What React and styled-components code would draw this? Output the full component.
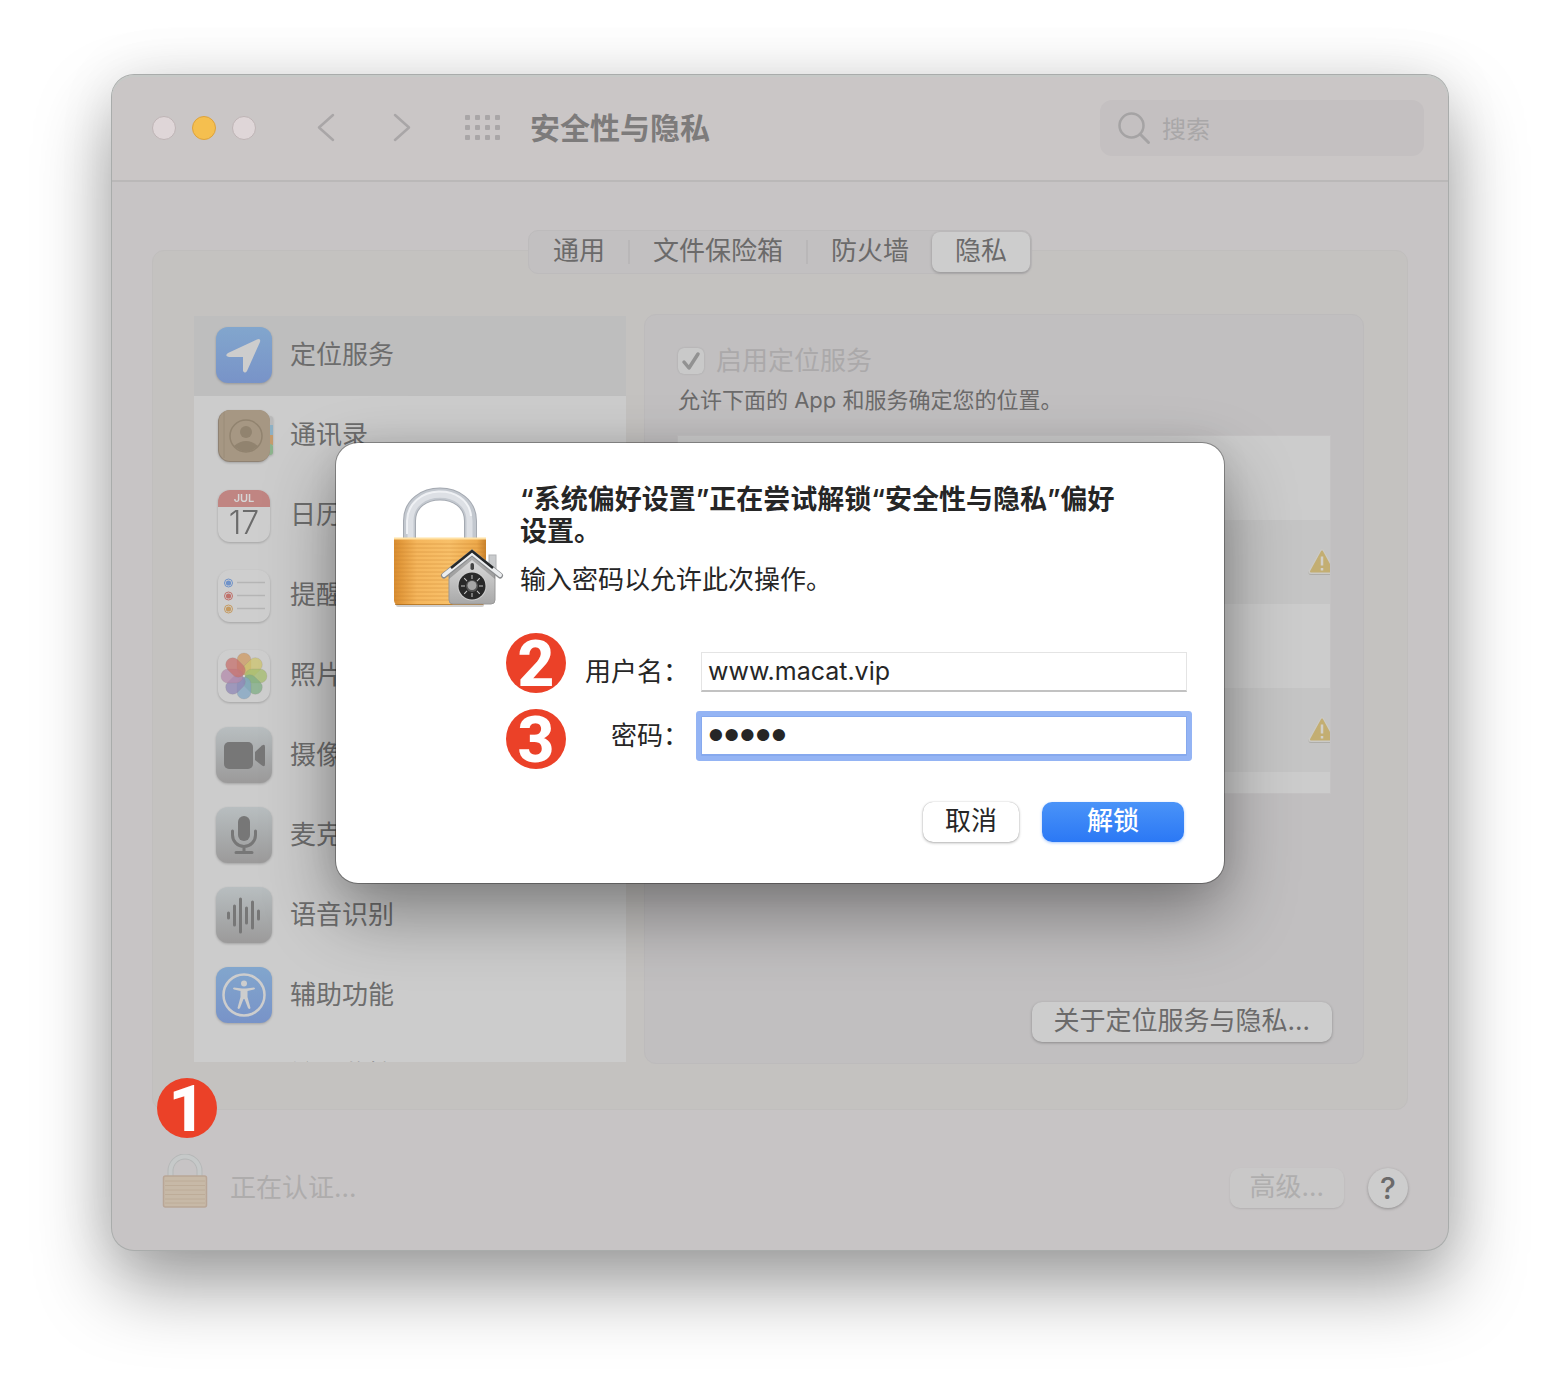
import React from 'react';
import styled, { createGlobalStyle, css } from 'styled-components';

const GlobalStyle = createGlobalStyle`
    * {
        box-sizing: border-box;
    }
    body {
        margin: 0;
        background: #fff;
        font-family: Inter, "Noto Sans CJK SC", sans-serif;
        font-size: 26px;
        line-height: 32px;
        color: #6b6a6a;
    }
    button, input {
        font: inherit;
        color: inherit;
        margin: 0;
    }
`;

const Page = styled.main`
    min-height: 100vh;
    padding: 75px 112px 148px;
`;

const Window = styled.section`
    position: relative;
    background: #c7c4c5;
    border-radius: 22px;
    box-shadow: 0 0 0 1px #a9acab, 0 0 60px rgba(0, 0, 0, .08), 0 36px 76px rgba(0, 0, 0, .38);
`;

const TitleBar = styled.header`
    display: flex;
    align-items: center;
    height: 107px;
    padding: 1px 24px 0 40px;
    background: #cac6c6;
    border-bottom: 2px solid #bab8b8;
    border-radius: 22px 22px 0 0;
    box-shadow: inset 0 2px 0 #c6c9c7;
`;

const Lights = styled.div`
    display: flex;
    gap: 16px;
`;

const Light = styled.button`
    width: 24px;
    height: 24px;
    padding: 0;
    border: 1px solid ${p => p.$active ? '#dda23c' : '#beb4b5'};
    border-radius: 50%;
    background: ${p => p.$active ? '#f5bf4f' : '#dfd6d8'};
`;

const Nav = styled.nav`
    display: flex;
    align-items: center;
    gap: 48px;
    margin-left: 58px;
`;

const IconButton = styled.button`
    display: flex;
    padding: 0;
    border: 0;
    background: none;
    color: #a9a6a7;
`;

const Title = styled.h1`
    flex: 1;
    margin: 0 0 0 28px;
    font-size: 30px;
    line-height: 36px;
    font-weight: 700;
    color: #7d7b7b;
`;

const SearchBox = styled.label`
    display: flex;
    align-items: center;
    gap: 10px;
    width: 324px;
    height: 56px;
    padding: 0 16px;
    border-radius: 12px;
    background: #c4c0c1;
    color: #a5a3a4;

    input {
        flex: 1;
        min-width: 0;
        padding: 4px 0 0;
        border: 0;
        outline: none;
        background: none;
        font-size: 24px;
    }
    input::placeholder {
        color: #a9a7a8;
        opacity: 1;
    }
`;

const Content = styled.div`
    padding: 48px 40px 0;
`;

const Tabs = styled.div`
    position: relative;
    z-index: 1;
    display: flex;
    align-items: center;
    width: max-content;
    height: 44px;
    margin: 0 auto;
    padding: 0 1px;
    border: 1px solid #bdbbbc;
    border-radius: 10px;
    background: #c2c0c1;
`;

const Tab = styled.button`
    height: 40px;
    padding: 0 23px 2px;
    border: 0;
    border-radius: 8px;
    background: none;
    line-height: 36px;

    ${p => p.$selected && css`
        background: #cdcdcd;
        box-shadow: 0 1px 3px rgba(0, 0, 0, .25);
    `}
`;

const TabDivider = styled.span`
    width: 2px;
    height: 24px;
    background: #b9b7b8;
`;

const GroupBox = styled.div`
    display: grid;
    grid-template-columns: 432px 1fr;
    gap: 18px;
    align-items: center;
    margin-top: -24px;
    padding: 63px 43px 45px 41px;
    border: 1px solid #c0bebd;
    border-radius: 12px;
    background: #c4c2c0;
`;

const Services = styled.ul`
    height: 746px;
    margin: 0;
    padding: 0;
    overflow: hidden;
    list-style: none;
    background: #cccccc;
`;

const Service = styled.li`
    display: flex;
    align-items: center;
    gap: 18px;
    height: 80px;
    padding: 0 22px 2px;
    background: ${p => p.$selected ? '#bebebe' : 'transparent'};
    color: #6d6d6d;

    svg {
        flex: none;
        overflow: visible;
        filter: drop-shadow(0 1px 1px rgba(0, 0, 0, .2));
    }
`;

const Pane = styled.section`
    display: flex;
    flex-direction: column;
    height: 750px;
    padding: 30px 31px 21px 33px;
    border: 1px solid #bdbbbc;
    border-radius: 12px;
    background: #c1bfc0;
`;

const Option = styled.label`
    display: flex;
    align-items: center;
    gap: 12px;
    color: #aba9aa;
`;

const Check = styled.span`
    display: grid;

    & > * {
        grid-area: 1 / 1;
        place-self: center;
    }
    input {
        appearance: none;
        width: 26px;
        height: 26px;
        border-radius: 6px;
        background: #c9c9c9;
        box-shadow: 0 0 2px rgba(0, 0, 0, .15);
    }
    svg {
        z-index: 1;
        pointer-events: none;
    }
`;

const Hint = styled.p`
    margin: 7px 0 20px;
    font-size: 22px;
`;

const AppList = styled.div`
    height: 357px;
    margin-right: 2px;
    overflow: hidden;
    background: repeating-linear-gradient(#cccccc 0 84px, #c5c5c5 84px 168px);
    box-shadow: 0 0 0 1px #c4c2c3;
`;

const AppRow = styled.div`
    display: flex;
    align-items: center;
    justify-content: flex-end;
    height: 84px;

    svg {
        flex: none;
        margin-right: -6px;
    }
`;

const Button = styled.button`
    height: 40px;
    padding: 0 22px 2px;
    border: 0;
    border-radius: 10px;
    line-height: 36px;
    background: #cdcdcd;
    box-shadow: 0 1px 3px rgba(0, 0, 0, .28);

    ${p => p.$dim && css`
        padding: 0 20px 2px;
        background: #c9c8c8;
        color: #afaeae;
        box-shadow: 0 1px 2px rgba(0, 0, 0, .1);
    `}
    ${p => p.$plain && css`
        background: #fff;
        color: #262626;
        box-shadow: 0 0 1px rgba(0, 0, 0, .3), 0 1px 3px rgba(0, 0, 0, .3);
    `}
    ${p => p.$primary && css`
        padding: 0 45px 2px;
        background: linear-gradient(#4a93f8, #2b78f5);
        color: #fff;
        font-weight: 500;
        box-shadow: 0 1px 3px rgba(43, 120, 245, .4);
    `}
`;

const AboutButton = styled(Button)`
    margin-top: auto;
    align-self: flex-end;
`;

const Footer = styled.footer`
    position: relative;
    display: flex;
    align-items: flex-end;
    height: 140px;
    padding: 0 0 42px 10px;
`;

const Status = styled.span`
    flex: 1;
    margin-left: 22px;
    line-height: 40px;
    color: #aeacac;
`;

const HelpButton = styled.button`
    width: 40px;
    height: 40px;
    margin-left: 24px;
    padding: 0;
    border: 0;
    border-radius: 50%;
    background: #cdcdcd;
    font-size: 30px;
    font-weight: 500;
    box-shadow: 0 1px 3px rgba(0, 0, 0, .28);
`;

const StepBadge = styled.span`
    position: absolute;
    left: ${p => p.$left};
    top: ${p => p.$top};
    width: 60px;
    height: 60px;
    border-radius: 50%;
    background: #eb4128;
    color: #fff;
    font: 800 64px/64px Roboto, sans-serif;
    text-align: center;
`;

const Dialog = styled.form`
    position: absolute;
    top: 50%;
    left: 50%;
    z-index: 2;
    width: 888px;
    padding: 41px 37px 41px 54px;
    border-radius: 22px;
    background: #fff;
    color: #262626;
    transform: translate(-50%, -50%);
    box-shadow: 0 0 0 1px rgba(0, 0, 0, .3), 0 0 30px rgba(0, 0, 0, .08), 0 30px 70px rgba(0, 0, 0, .38);
`;

const DialogHead = styled.div`
    display: flex;
    gap: 14px;
    margin-bottom: 42px;
`;

const DialogText = styled.div`
    max-width: 600px;

    h2 {
        margin: 0 0 16px;
        font-size: 27px;
        line-height: 32px;
        font-weight: 600;
    }
    p {
        margin: 0;
    }
`;

const Field = styled.div`
    position: relative;
    display: grid;
    grid-template-columns: 1fr 486px;
    gap: 12px;
    align-items: center;

    & + & {
        margin-top: 24px;
    }
    label {
        text-align: right;
    }
`;

const TextInput = styled.input`
    width: 100%;
    height: 40px;
    padding: 0 6px;
    border: 1px solid #e4e4e4;
    border-bottom: 2px solid #c2c2c2;
    outline: none;
    background: #fff;
    font-size: 25px;

    &[type=password] {
        font-family: "Liberation Sans", sans-serif;
        font-size: 45px;
        line-height: 36px;
    }
    ${p => p.$focused && css`
        border-color: #86a9ee;
        box-shadow: 0 0 0 5px #94b4f4;
        border-radius: 1px;
    `}
`;

const Actions = styled.div`
    display: flex;
    justify-content: flex-end;
    gap: 23px;
    margin-top: 46px;
    padding-right: 3px;
`;

const Tile = ({ from, to, children }) => {
    const id = React.useId();
    return <svg width="56" height="56" viewBox="0 0 56 56" aria-hidden="true">
        <defs>
            <linearGradient id={id} x2="0" y2="1">
                <stop stopColor={from} />
                <stop offset="1" stopColor={to} />
            </linearGradient>
        </defs>
        <rect width="56" height="56" rx="12" fill={`url(#${id})`} />
        {children}
    </svg>;
};

const PaperTile = ({ children }) => <svg width="56" height="56" viewBox="0 0 56 56" aria-hidden="true">
    <rect x="2" y="3" width="52" height="52" rx="12" fill="#cecece" />
    {children}
</svg>;

const LocationIcon = () => <Tile from="#82a6cd" to="#7893c8">
    <path d="M12 26 41 12.500Q45 11 44 15L31 44Q29 47 27 44V30H13Q8 29 12 26Z" fill="#cdcdcd" />
</Tile>;

const ContactsIcon = () => <svg width="56" height="56" viewBox="0 0 56 56" aria-hidden="true">
    <rect x="48" y="9" width="9" height="12" rx="3" fill="#b9b9b9" />
    <rect x="48" y="18" width="9" height="10" fill="#8db0c4" />
    <rect x="48" y="28" width="9" height="10" fill="#c49b6c" />
    <rect x="48" y="37" width="9" height="11" rx="3" fill="#8cb38c" />
    <rect x="2" y="3" width="52" height="52" rx="12" fill="#8f8273" />
    <rect x="3" y="3" width="51" height="51" rx="11" fill="#a69783" />
    <path d="M8 5v46" stroke="#9a8c79" strokeWidth="1" />
    <circle cx="30" cy="29" r="16" fill="none" stroke="#91836f" strokeWidth="1.500" />
    <circle cx="30" cy="25" r="6" fill="#91836f" />
    <path d="M18 39q12-10 24 0-12 11-24 0Z" fill="#91836f" />
</svg>;

const CalendarIcon = () => <PaperTile>
    <path d="M2 20v-5A12 12 0 0 1 14 3h28a12 12 0 0 1 12 12v5Z" fill="#c08582" />
    <text x="28" y="15" textAnchor="middle" fontSize="11" fontWeight="600" fill="#d6d6d6">JUL</text>
    <text x="28" y="47" textAnchor="middle" fontSize="32" fontWeight="300" fill="#6b6b6b">17</text>
</PaperTile>;

const RemindersIcon = () => <PaperTile>
    {['#6f92c9', '#bf716b', '#c59a60'].map((color, i) => <g key={color}>
        <circle cx="12.500" cy={16 + i * 13} r="4" fill="none" stroke={color} />
        <circle cx="12.500" cy={16 + i * 13} r="2.600" fill={color} />
        <path d={`M21 ${15.5 + i * 13}h28`} stroke="#b5b5b5" strokeWidth="1.500" />
    </g>)}
</PaperTile>;

const PETALS = ['#cf9a63', '#cdc46e', '#a6bd6f', '#7fae85', '#82a5c4', '#8f88b5', '#b48bac', '#c6736f'];

const PhotosIcon = () => <PaperTile>
    {PETALS.map((color, i) => <rect
        key={color}
        x="21" y="6" width="14" height="22" rx="7"
        fill={color} fillOpacity=".76" stroke="#8a7f7f" strokeOpacity=".3" strokeWidth=".6"
        transform={`rotate(${i * 45} 28 29)`}
    />)}
    <circle cx="28" cy="29" r="1.200" fill="#d0d0d0" />
</PaperTile>;

const CameraIcon = () => <Tile from="#b8bec0" to="#9b9a9a">
    <rect x="8" y="15" width="29" height="27" rx="5" fill="#777" />
    <path d="M39 25 46 18.500Q49 16.500 49 20V37Q49 40.500 46 38.500L39 33Z" fill="#777" />
</Tile>;

const MicIcon = () => <Tile from="#b8bec0" to="#9b9a9a">
    <rect x="22" y="9" width="12" height="25" rx="6" fill="#777" />
    <path d="M16.500 24v4a11.500 11.500 0 0 0 23 0v-4M28 40v5M20 45.500h16" fill="none" stroke="#777" strokeWidth="3" strokeLinecap="round" />
</Tile>;

const SpeechIcon = () => <Tile from="#b8bec0" to="#9b9a9a">
    <path d="M12.500 26v5M18.500 19v19M24.500 12v33M30.500 21v15M36.500 15v26M42.500 24v8" stroke="#777" strokeWidth="3" strokeLinecap="round" />
</Tile>;

const AccessibilityIcon = () => <Tile from="#82a6cd" to="#7893c8">
    <circle cx="28" cy="28" r="20.500" fill="none" stroke="#cdcdcd" strokeWidth="2.500" />
    <circle cx="28" cy="16.500" r="3" fill="#cdcdcd" />
    <path d="M18 20.500 26 21.500h4l8-1q2 1 0 2l-6.500 1.500v6l3 11q-1 2-2.500 0L28.500 32h-1L24 41q-1.500 2-2.500 0l3-11v-6L18 22.500q-2-1 0-2Z" fill="#cdcdcd" />
</Tile>;

const WarningIcon = () => <svg width="28" height="28" viewBox="0 0 28 28" aria-hidden="true">
    <path d="M14 4 25 24.500H3Z" fill="#aeada9" stroke="#aeada9" strokeWidth="5" strokeLinejoin="round" />
    <path d="M14 3.500 25 23.500H3Z" fill="#cbcac6" stroke="#cbcac6" strokeWidth="5" strokeLinejoin="round" />
    <path d="M14 3.500 25 23.500H3Z" fill="#c3ae72" stroke="#c3ae72" strokeWidth="2" strokeLinejoin="round" />
    <path d="M14 8.500v9M14 20v2.500" stroke="#d2d0c9" strokeWidth="2.500" />
</svg>;

const SmallLock = () => <svg width="46" height="54" viewBox="0 0 46 54" aria-hidden="true">
    <path d="M8.500 24V17a14.500 14.500 0 0 1 29 0v7" fill="none" stroke="#b5b7b7" strokeWidth="6" />
    <path d="M8.500 24V17a14.500 14.500 0 0 1 29 0v7" fill="none" stroke="#c6c9c9" strokeWidth="4" />
    <rect x="1.500" y="22" width="43" height="31" rx="2" fill="#c7b9a7" stroke="#b9a697" strokeWidth="1.500" />
    <path d="M3 27h40M3 31.500h40M3 36h40M3 40.500h40M3 45h40M3 49h40" stroke="#bdac98" />
</svg>;

const LockArt = () => <svg width="116" height="126" viewBox="0 0 116 126" aria-hidden="true">
    <defs>
        <linearGradient id="brass">
            <stop stopColor="#d88c30" />
            <stop offset=".08" stopColor="#e39a3c" />
            <stop offset=".25" stopColor="#f5b65c" />
            <stop offset=".6" stopColor="#f8c069" />
            <stop offset=".9" stopColor="#eda94b" />
            <stop offset="1" stopColor="#c9812a" />
        </linearGradient>
        <linearGradient id="wall" x2="0" y2="1">
            <stop stopColor="#e3e3e3" />
            <stop offset="1" stopColor="#a8a8a8" />
        </linearGradient>
    </defs>
    <path d="M19.500 56V37C19.500 1 80.500 1 80.500 37V56" fill="none" stroke="#a4a9b1" strokeWidth="13" />
    <path d="M19.500 56V37C19.500 1 80.500 1 80.500 37V56" fill="none" stroke="#c3c8cf" strokeWidth="11" />
    <path d="M20.500 56V37C20.500 2 79.500 2 79.500 37V56" fill="none" stroke="#dde0e5" strokeWidth="6" />
    <path d="M17 50V37C18-1 78-2 81 32" fill="none" stroke="#f8f9fb" strokeWidth="2" opacity=".8" />
    <rect x="6" y="119" width="88" height="4" rx="2" fill="#777" opacity=".35" />
    <path d="M4 54H96V116Q96 121 91 121H9Q4 121 4 116Z" fill="url(#brass)" />
    <path d="M4 54.500H96" stroke="#ffe1a4" strokeWidth="2" />
    <path d="M4 60h92M4 64h92M4 68h92M4 72h92M4 76h92M4 80h92M4 84h92M4 88h92M4 92h92M4 96h92M4 100h92M4 104h92M4 108h92M4 112h92M4 116h92" stroke="#c47f2c" opacity=".38" />
    <path d="M5 120.500H93" stroke="#a46619" opacity=".7" />
    <rect x="99" y="71" width="7" height="16" fill="#c9cbcd" stroke="#b0b2b4" />
    <path d="M59 86 82 68 105 89V116Q105 120 101 120H63Q59 120 59 116Z" fill="url(#wall)" stroke="#999" />
    <path d="M59 91 82 71 105 91V95L82 76 59 95Z" fill="#555" opacity=".35" />
    <path d="M54 91.500 82 69 110 91.500" fill="none" stroke="#8b8d8f" strokeWidth="6" strokeLinecap="round" />
    <path d="M54 91 82 69 110 91" fill="none" stroke="#eceef0" strokeWidth="4" strokeLinecap="round" />
    <path d="M61 84 82 67 103 84" fill="none" stroke="#25282a" strokeWidth="2.500" />
    <rect x="80.500" y="79" width="3.500" height="7" rx="1.700" fill="#444" />
    <circle cx="82" cy="102" r="14.500" fill="#cfcfcf" />
    <circle cx="82" cy="102" r="13.500" fill="#292929" />
    {[0, 45, 90, 135, 180, 225, 270, 315].map(a => <path
        key={a} d="M82 91v4" stroke="#c8c8c8" transform={`rotate(${a} 82 102)`}
    />)}
    <circle cx="82" cy="102" r="6" fill="#555" />
    <circle cx="82" cy="101.500" r="4.500" fill="#a6a6a6" />
</svg>;

const SERVICES = [
    { name: '定位服务', icon: LocationIcon },
    { name: '通讯录', icon: ContactsIcon },
    { name: '日历', icon: CalendarIcon },
    { name: '提醒事项', icon: RemindersIcon },
    { name: '照片', icon: PhotosIcon },
    { name: '摄像头', icon: CameraIcon },
    { name: '麦克风', icon: MicIcon },
    { name: '语音识别', icon: SpeechIcon },
    { name: '辅助功能', icon: AccessibilityIcon },
    { name: '输入监控', icon: () => <svg width="56" height="56" aria-hidden="true" /> },
];

const TABS = ['通用', '文件保险箱', '防火墙', '隐私'];

const Toolbar = () => <TitleBar>
    <Lights>
        <Light type="button" aria-label="关闭" />
        <Light type="button" aria-label="最小化" $active />
        <Light type="button" aria-label="缩放" />
    </Lights>
    <Nav>
        <IconButton type="button" aria-label="后退">
            <svg width="26" height="32" viewBox="0 0 26 32" fill="none" stroke="currentColor" strokeWidth="2.500" strokeLinecap="round" strokeLinejoin="round">
                <path d="M19 3 5 15.500 19 28" />
            </svg>
        </IconButton>
        <IconButton type="button" aria-label="前进">
            <svg width="26" height="32" viewBox="0 0 26 32" fill="none" stroke="currentColor" strokeWidth="2.500" strokeLinecap="round" strokeLinejoin="round">
                <path d="M7 3 21 15.500 7 28" />
            </svg>
        </IconButton>
        <IconButton type="button" aria-label="显示全部">
            <svg width="40" height="28" viewBox="0 0 40 28" fill="currentColor">
                {[1, 11, 21].map(y => [3, 13, 23, 33].map(x => <rect key={`${x}-${y}`} x={x} y={y} width="5" height="5" rx="1" />))}
            </svg>
        </IconButton>
    </Nav>
    <Title>安全性与隐私</Title>
    <SearchBox>
        <svg width="36" height="36" viewBox="0 0 36 36" fill="none" stroke="currentColor" strokeLinecap="round" aria-hidden="true">
            <circle cx="15.500" cy="15.500" r="12" strokeWidth="2.500" />
            <path d="m24.500 24.500 8 8" strokeWidth="3" />
        </svg>
        <input type="text" placeholder="搜索" aria-label="搜索" />
    </SearchBox>
</TitleBar>;

const UnlockDialog = () => <Dialog role="dialog" aria-labelledby="unlock-title" onSubmit={e => e.preventDefault()}>
    <DialogHead>
        <LockArt />
        <DialogText>
            <h2 id="unlock-title">“系统偏好设置”正在尝试解锁“安全性与隐私”偏好设置。</h2>
            <p>输入密码以允许此次操作。</p>
        </DialogText>
    </DialogHead>
    <Field>
        <label htmlFor="user">用户名：</label>
        <TextInput id="user" type="text" defaultValue="www.macat.vip" />
        <StepBadge $left="116px" $top="-19px">2</StepBadge>
    </Field>
    <Field>
        <label htmlFor="password">密码：</label>
        <TextInput id="password" type="password" defaultValue="macat" $focused />
        <StepBadge $left="116px" $top="-7px">3</StepBadge>
    </Field>
    <Actions>
        <Button type="button" $plain>取消</Button>
        <Button type="submit" $primary>解锁</Button>
    </Actions>
</Dialog>;

const App = () => <Page>
    <GlobalStyle />
    <Window>
        <Toolbar />
        <Content>
            <Tabs role="tablist">
                {TABS.map((name, i) => <React.Fragment key={name}>
                    {(i === 1 || i === 2) && <TabDivider />}
                    <Tab type="button" role="tab" aria-selected={i === 3} $selected={i === 3}>{name}</Tab>
                </React.Fragment>)}
            </Tabs>
            <GroupBox>
                <Services>
                    {SERVICES.map(({ name, icon: Icon }, i) => <Service key={name} $selected={i === 0}>
                        <Icon />
                        {name}
                    </Service>)}
                </Services>
                <Pane>
                    <Option>
                        <Check>
                            <input type="checkbox" defaultChecked disabled />
                            <svg width="20" height="22" viewBox="0 0 20 22" fill="none" stroke="#929292" strokeWidth="3.500" strokeLinecap="round" strokeLinejoin="round" aria-hidden="true">
                                <path d="m3 12 5 6 9-14" />
                            </svg>
                        </Check>
                        启用定位服务
                    </Option>
                    <Hint>允许下面的 App 和服务确定您的位置。</Hint>
                    <AppList>
                        {[false, true, false, true].map((warn, i) => <AppRow key={i}>{warn && <WarningIcon />}</AppRow>)}
                    </AppList>
                    <AboutButton type="button">关于定位服务与隐私...</AboutButton>
                </Pane>
            </GroupBox>
            <Footer>
                <SmallLock />
                <Status>正在认证...</Status>
                <Button type="button" disabled $dim>高级...</Button>
                <HelpButton type="button" aria-label="帮助">?</HelpButton>
                <StepBadge $left="5px" $top="-32px">1</StepBadge>
            </Footer>
        </Content>
        <UnlockDialog />
    </Window>
</Page>;

export default App;
